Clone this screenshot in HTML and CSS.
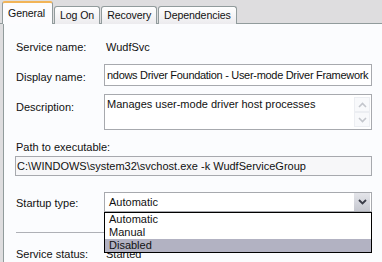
FILE: index.html
```html
<!DOCTYPE html>
<html lang="en">
<head>
    <meta charset="UTF-8">
    <title>WudfSvc Properties</title>
    <link rel="stylesheet" href="styles.css">
</head>
<body>
    <div class="tabs">
        <div class="tab active">General</div>
        <div class="tab">Log On</div>
        <div class="tab">Recovery</div>
        <div class="tab">Dependencies</div>
    </div>
    <div class="panel">
        <div class="row name-row">
            <span class="label">Service name:</span>
            <span class="value">WudfSvc</span>
        </div>
        <div class="row display-row">
            <span class="label">Display name:</span>
            <div class="textbox display">ndows Driver Foundation - User-mode Driver Framework</div>
        </div>
        <div class="row desc-row">
            <span class="label">Description:</span>
            <div class="textbox memo">
                <span>Manages user-mode driver host processes</span>
                <div class="scroll">
                    <span class="arrow"><svg width="9" height="6" viewBox="0 0 9 6"><path d="M1 5 L4.5 1.5 L8 5" fill="none" stroke="#c3c6cc" stroke-width="1.6"/></svg></span>
                    <span class="arrow"><svg width="9" height="6" viewBox="0 0 9 6"><path d="M1 1 L4.5 4.5 L8 1" fill="none" stroke="#c3c6cc" stroke-width="1.6"/></svg></span>
                </div>
            </div>
        </div>
        <div class="path-label">Path to executable:</div>
        <div class="textbox path">C:\WINDOWS\system32\svchost.exe -k WudfServiceGroup</div>
        <div class="row startup-row">
            <span class="label">Startup type:</span>
            <div class="combo">
                <span class="combo-text">Automatic</span>
                <span class="drop-btn"><svg width="9" height="6" viewBox="0 0 9 6"><path d="M1 1 L4.5 4.5 L8 1" fill="none" stroke="#3a3d48" stroke-width="1.8"/></svg></span>
                <ul class="list">
                    <li>Automatic</li>
                    <li>Manual</li>
                    <li class="selected">Disabled</li>
                </ul>
            </div>
        </div>
        <div class="sep"></div>
        <div class="row status-row">
            <span class="label">Service status:</span>
            <span class="value">Started</span>
        </div>
    </div>
</body>
</html>
```

FILE: styles.css
```css
body {
    margin: 0;
    background-color: #dedddf;
    font-family: 'Liberation Sans', Arial, sans-serif;
    font-size: 11px;
    color: #111;
    overflow: hidden;
}

.tabs {
    display: flex;
    align-items: flex-end;
    height: 23px;
    padding-left: 2px;
    border-bottom: 1px solid #919b9c;
}

.tab {
    height: 17px;
    line-height: 17px;
    padding: 0 5px;
    margin-right: 1px;
    margin-bottom: -1px;
    border: 1px solid #919b9c;
    border-bottom: none;
    border-radius: 3px 3px 0 0;
    background: linear-gradient(#ffffff, #ecebee);
    font-size: 10.6px;
    letter-spacing: -0.1px;
}

.tab.active {
    height: 21px;
    line-height: 21px;
    padding: 0 7px 0 5px;
    background: #fcfcfe;
    border-top: 2px solid #f2b457;
    margin-bottom: -1px;
    position: relative;
    z-index: 1;
}

.panel {
    margin-left: 3px;
    border-left: 1px solid #919b9c;
    background-color: #fbfcfe;
    padding-left: 12px;
    height: 240px;
}

.row {
    display: flex;
    align-items: flex-start;
}

.label {
    width: 88px;
    flex: none;
    line-height: 14px;
}

.value {
    padding-left: 2px;
    line-height: 14px;
}

.name-row {
    padding-top: 16px;
}

.display-row {
    margin-top: 10px;
}

.display-row .label {
    margin-top: 6px;
}

.textbox {
    box-sizing: border-box;
    width: 268px;
    height: 22px;
    border: 1px solid #a7a9ae;
    background-color: #fff;
    padding: 3px 2px;
    line-height: 14px;
    white-space: nowrap;
    overflow: hidden;
}

.textbox.display {
    letter-spacing: -0.3px;
}

.desc-row {
    margin-top: 8px;
}

.desc-row .label {
    margin-top: 6px;
}

.memo {
    height: 36px;
    display: flex;
    justify-content: space-between;
    padding: 2px 1px 1px 2px;
}

.scroll {
    display: flex;
    flex-direction: column;
    width: 16px;
}

.arrow {
    height: 15px;
    display: flex;
    align-items: center;
    justify-content: center;
    border: 1px solid #eceef2;
    box-sizing: border-box;
    background-color: #f8f9fb;
}

.path-label {
    margin-top: 10px;
    line-height: 14px;
}

.textbox.path {
    margin-top: 2px;
    margin-left: -1px;
    width: 357px;
    height: 20px;
    padding: 2px 1px;
    background-color: #f7f7f9;
}

.startup-row {
    margin-top: 16px;
}

.startup-row .label {
    margin-top: 4px;
}

.combo {
    position: relative;
    box-sizing: border-box;
    width: 268px;
    height: 20px;
    border: 1px solid #a7a9ae;
    background-color: #fff;
    display: flex;
    align-items: center;
    justify-content: space-between;
}

.combo-text {
    padding-left: 4px;
}

.drop-btn {
    width: 16px;
    height: 18px;
    margin-right: 1px;
    display: flex;
    align-items: center;
    justify-content: center;
    background: linear-gradient(#e4e5ea, #c6c8d0);
}

.list {
    position: absolute;
    left: -1px;
    top: 19px;
    width: 268px;
    box-sizing: border-box;
    margin: 0;
    padding: 0;
    list-style: none;
    border: 1px solid #000;
    background-color: #fff;
    z-index: 2;
}

.list li {
    height: 13px;
    line-height: 13px;
    padding-left: 4px;
}

.list li.selected {
    background-color: #b2b2c2;
}

.sep {
    margin-top: 20px;
    width: 100px;
    border-top: 1px solid #aeb0b6;
}

.status-row {
    margin-top: 14px;
}
```
